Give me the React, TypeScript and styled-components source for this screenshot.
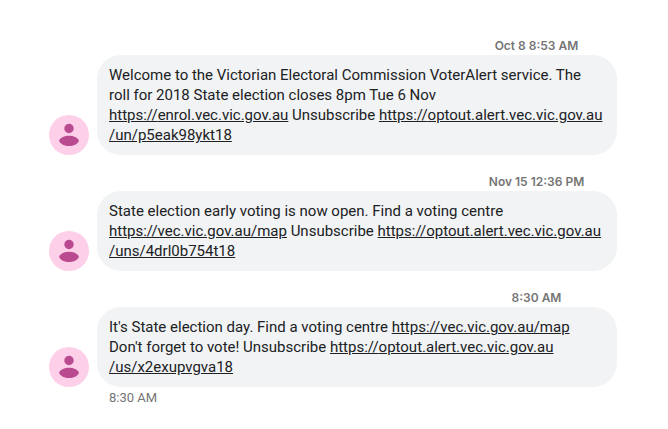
import React from "react";
import styled, { createGlobalStyle } from "styled-components";

const GlobalStyle = createGlobalStyle`
  * { box-sizing: border-box; }
  body { margin: 0; background: #fff; }
`;

const Conversation = styled.main`
  display: flex;
  flex-direction: column;
  gap: 18px;
  padding: 37px 51px 24px 49px;
  font-family: Roboto, "Liberation Sans", sans-serif;
`;

const Message = styled.article`
  display: grid;
  grid-template-columns: 40px minmax(0, 1fr);
  column-gap: 8px;
`;

const Stamp = styled.time`
  grid-column: 2;
  justify-self: center;
  padding-left: 359px;
  color: #757575;
  font-family: Inter, sans-serif;
  font-size: 12px;
  font-weight: 600;
  line-height: 18px;
  white-space: nowrap;
`;

const Avatar = styled.svg`
  grid-column: 1;
  align-self: end;
  width: 40px;
  height: 40px;
`;

const Bubble = styled.p`
  margin: 0;
  padding: 10px 12px;
  border-radius: 24px;
  background: #f1f3f4;
  color: #202124;
  font-size: 15px;
  line-height: 20px;
`;

const Link = styled.a`
  color: inherit;
  text-decoration: underline;
`;

const Received = styled.time`
  grid-column: 2;
  padding-left: 12px;
  color: #757575;
  font-size: 13px;
  line-height: 22px;
`;

function SenderAvatar() {
  return (
    <Avatar viewBox="0 0 40 40" role="img" aria-label="Sender">
      <circle cx="20" cy="20" r="20" fill="#fdcfe8" />
      <circle cx="20" cy="13.5" r="4.7" fill="#b94a8f" />
      <path
        d="M20 20.800C15.500 20.800 11.500 22.500 10 25.700C11.500 29 15.500 31 20 31C24.500 31 28.500 29 30 25.700C28.500 22.500 24.500 20.800 20 20.800Z"
        fill="#b94a8f"
      />
    </Avatar>
  );
}

interface Entry {
  stamp: string;
  body: React.ReactNode;
  received?: string;
}

const link = (host: string, path?: string) => (
  <Link href={`https://${host}${path ?? ""}`}>
    https://{host}
    {path && <wbr />}
    {path}
  </Link>
);

const entries: Entry[] = [
  {
    stamp: "Oct 8 8:53 AM",
    body: (
      <>
        Welcome to the Victorian Electoral Commission VoterAlert service. The roll for 2018 State
        election closes 8pm Tue 6 Nov {link("enrol.vec.vic.gov.au")} Unsubscribe{" "}
        {link("optout.alert.vec.vic.gov.au", "/un/p5eak98ykt18")}
      </>
    ),
  },
  {
    stamp: "Nov 15 12:36 PM",
    body: (
      <>
        State election early voting is now open. Find a voting centre{" "}
        <Link href="https://vec.vic.gov.au/map">https://vec.vic.gov.au/map</Link> Unsubscribe{" "}
        {link("optout.alert.vec.vic.gov.au", "/uns/4drl0b754t18")}
      </>
    ),
  },
  {
    stamp: "8:30 AM",
    received: "8:30 AM",
    body: (
      <>
        It's State election day. Find a voting centre{" "}
        <Link href="https://vec.vic.gov.au/map">https://vec.vic.gov.au/map</Link> Don't forget to
        vote! Unsubscribe {link("optout.alert.vec.vic.gov.au", "/us/x2exupvgva18")}
      </>
    ),
  },
];

export default function App() {
  return (
    <>
      <GlobalStyle />
      <Conversation aria-label="Conversation">
        {entries.map((entry) => (
          <Message key={entry.stamp}>
            <Stamp>{entry.stamp}</Stamp>
            <SenderAvatar />
            <Bubble>{entry.body}</Bubble>
            {entry.received && <Received>{entry.received}</Received>}
          </Message>
        ))}
      </Conversation>
    </>
  );
}
